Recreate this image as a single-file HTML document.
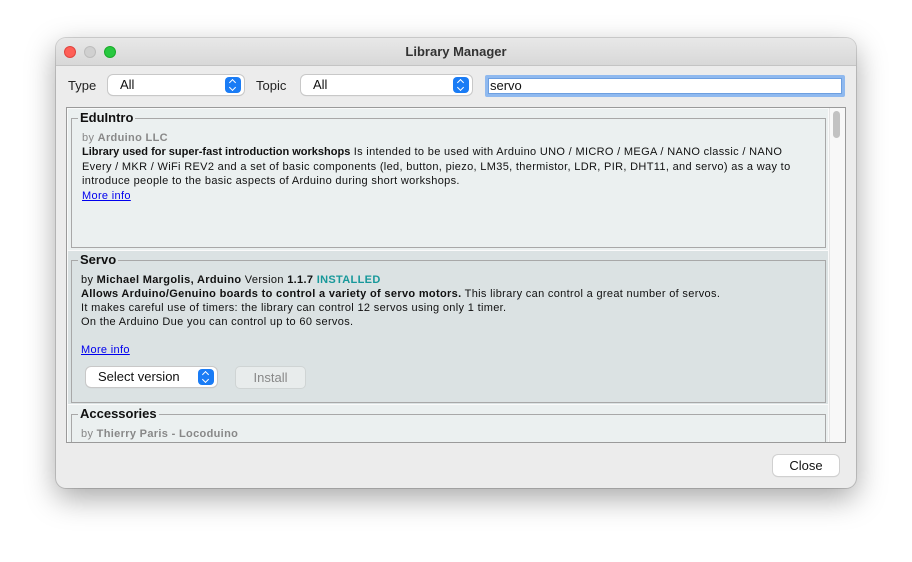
<!DOCTYPE html>
<html><head><style>
*{margin:0;padding:0;box-sizing:border-box}
body{width:912px;height:562px;background:#fff;position:relative;font-family:"Liberation Sans","DejaVu Sans",sans-serif;overflow:hidden}
.win{position:absolute;left:56px;top:38px;width:800px;height:450px;background:#ececec;border-radius:10px;box-shadow:0 10px 30px rgba(0,0,0,.35),0 0 0 1px rgba(0,0,0,.15);overflow:hidden}
.tb{position:absolute;left:0;top:0;width:800px;height:28px;background:linear-gradient(#e8e8e8,#d8d8d8);border-bottom:1px solid #c4c4c4;text-align:center;font-size:13px;font-weight:bold;line-height:27px;color:#333}
.dot{position:absolute;top:8px;width:12px;height:12px;border-radius:50%}
.a{position:absolute;font-size:13px;color:#222}
.sel{position:absolute;background:#fff;border-radius:5px;box-shadow:0 0 0 1px #c8c8c8,0 1px 1px rgba(0,0,0,.15);font-size:13px;line-height:20px;padding-left:12px;color:#111}
.arr{position:absolute;right:3px;top:2px;width:16px;height:16px;background:#1a7cf5;border-radius:4px}
.arr:before{content:"";position:absolute;left:5px;top:3px;width:4px;height:4px;border-left:1.5px solid #fff;border-top:1.5px solid #fff;transform:rotate(45deg)}
.arr:after{content:"";position:absolute;left:5px;top:8px;width:4px;height:4px;border-right:1.5px solid #fff;border-bottom:1.5px solid #fff;transform:rotate(45deg)}
.list{position:absolute;left:10px;top:69px;width:780px;height:336px;border:1px solid #9a9a9a;background:#fafafa;overflow:hidden}
.p{position:absolute;left:1px;width:760px;background:#ebf0f0}
.fs{position:absolute;left:3px;right:2px;border:1px solid #a8a8a8}
.lg{position:absolute;left:6px;top:-9px;background:inherit;padding:0 2px;font-size:13px;font-weight:bold;color:#111}
.t{position:absolute;left:10px;font-size:11px;line-height:14px;color:#111;white-space:nowrap;letter-spacing:.33px}
.g{color:#888}
a{color:#00e;text-decoration:underline}
</style></head><body>
<div class="win">
<div class="tb">Library Manager
<div class="dot" style="left:8px;background:#fe5f57;border:1px solid #e0443e"></div>
<div class="dot" style="left:28px;background:#d0d0d0;border:1px solid #bdbdbd"></div>
<div class="dot" style="left:48px;background:#28c840;border:1px solid #1aab29"></div>
</div>
<div class="a" style="left:12px;top:40px">Type</div>
<div class="sel" style="left:52px;top:37px;width:136px;height:20px">All<div class="arr"></div></div>
<div class="a" style="left:200px;top:40px">Topic</div>
<div class="sel" style="left:245px;top:37px;width:171px;height:20px">All<div class="arr"></div></div>
<div style="position:absolute;left:429px;top:37px;width:360px;height:22px;background:#fff;border:3px solid #8fb9ef;border-radius:2px;font-size:13px;line-height:16px;padding-left:2px;color:#111"><div style="position:absolute;inset:0;border:1px solid #6d9fe0"></div>servo</div>
<div class="list">
 <div class="p" style="top:1px;height:141px">
  <div class="fs" style="top:9px;height:130px;background:#ebf0f0">
   <div class="lg" style="background:#ebf0f0">EduIntro</div>
   <div class="t" style="top:12px"><span class="g">by <b>Arduino LLC</b></span></div>
   <div class="t" style="top:26px;line-height:14.5px"><b style="letter-spacing:0">Library used for super-fast introduction workshops</b> Is intended to be used with Arduino UNO / MICRO / MEGA / NANO classic / NANO<br>Every / MKR / WiFi REV2 and a set of basic components (led, button, piezo, LM35, thermistor, LDR, PIR, DHT11, and servo) as a way to<br>introduce people to the basic aspects of Arduino during short workshops.<br><a>More info</a></div>
  </div>
 </div>
 <div class="p" style="top:143px;height:153px;background:#dbe2e3">
  <div class="fs" style="top:9px;height:143px;background:#dbe2e3">
   <div class="lg" style="background:#dbe2e3">Servo</div>
   <div class="t" style="top:12px;left:9px">by <b>Michael Margolis, Arduino</b> Version <b>1.1.7</b> <b style="color:#17989a">INSTALLED</b></div>
   <div class="t" style="top:26px;left:9px"><b>Allows Arduino/Genuino boards to control a variety of servo motors.</b> This library can control a great number of servos.</div>
   <div class="t" style="top:40px;left:9px">It makes careful use of timers: the library can control 12 servos using only 1 timer.</div>
   <div class="t" style="top:54px;left:9px">On the Arduino Due you can control up to 60 servos.</div>
   <div class="t" style="top:82px;left:9px"><a>More info</a></div>
   <div class="sel" style="left:14px;top:106px;width:131px;height:20px;font-size:13px;padding-left:12px">Select version<div class="arr"></div></div>
   <div style="position:absolute;left:164px;top:106px;width:69px;height:21px;background:#e8ecec;border-radius:4px;box-shadow:0 0 0 1px #cfd4d4;font-size:13px;color:#888;text-align:center;line-height:21px">Install</div>
  </div>
 </div>
 <div class="p" style="top:297px;height:40px">
  <div class="fs" style="top:9px;height:40px;background:#ebf0f0">
   <div class="lg" style="background:#ebf0f0">Accessories</div>
   <div class="t" style="top:12px;left:9px"><span class="g">by <b>Thierry Paris - Locoduino</b></span></div>
  </div>
 </div>
 <div style="position:absolute;left:762px;top:0;width:17px;height:336px;background:#f8f8f8;border-left:1px solid #e4e4e4"></div>
 <div style="position:absolute;left:766px;top:3px;width:7px;height:27px;background:#c2c2c2;border-radius:4px"></div>
</div>
<div style="position:absolute;left:717px;top:417px;width:66px;height:21px;background:#fff;border-radius:5px;box-shadow:0 0 0 1px #d0d0d0,0 1px 1px rgba(0,0,0,.15);font-size:13px;text-align:center;line-height:21px;color:#111">Close</div>
</div>
</body></html>
